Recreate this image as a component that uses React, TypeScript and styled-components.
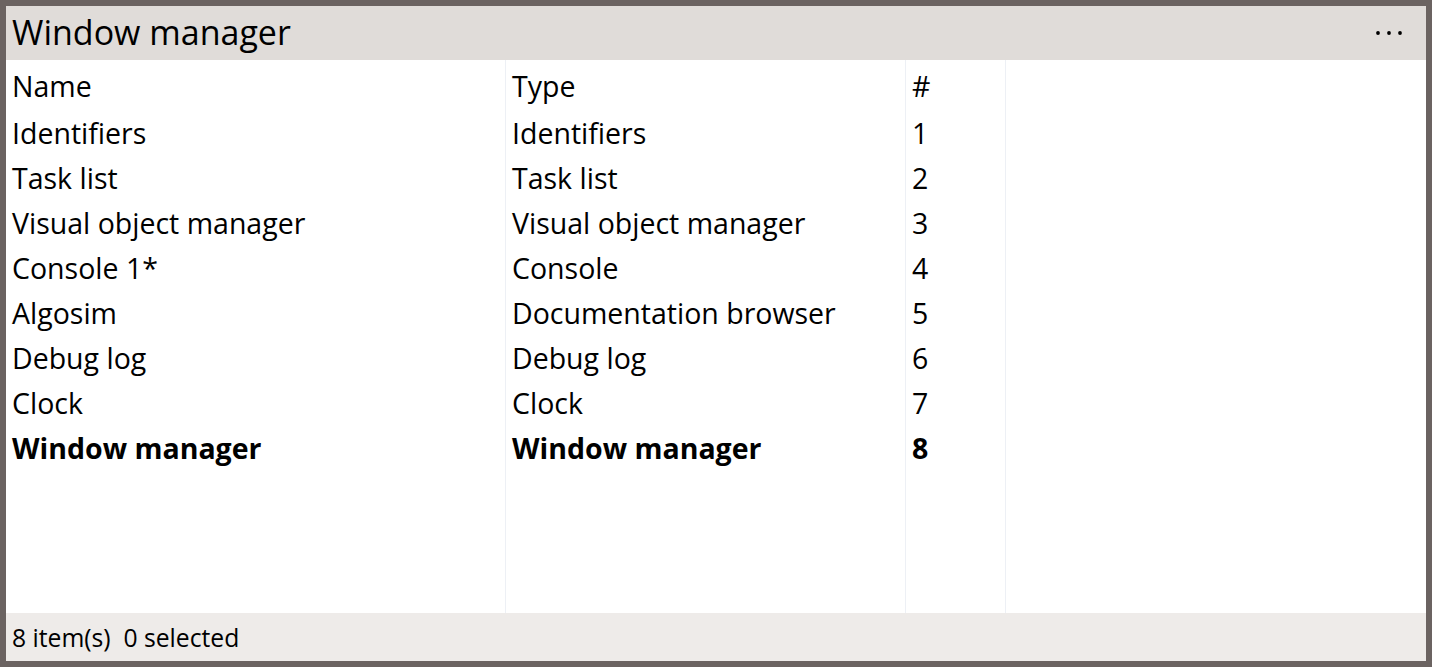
import React from "react";
import styled, { createGlobalStyle } from "styled-components";

const Global = createGlobalStyle`
  html, body { margin: 0; padding: 0; }
  body { background: #6b6361; font-family: "Open Sans", "Noto Sans", sans-serif; color: #000; }
  * { box-sizing: border-box; }
`;

const Frame = styled.div`
  width: 1432px;
  height: 667px;
  border: 6px solid #6b6361;
  background: #fff;
  display: flex;
  flex-direction: column;
  overflow: hidden;
`;

const TitleBar = styled.div`
  height: 54px;
  flex: none;
  background: #e0dcd9;
  display: flex;
  align-items: center;
  justify-content: space-between;
  padding: 0 22px 0 6px;
`;

const Title = styled.div`
  font-size: 34px;
  line-height: 1;
  padding-bottom: 2px;
`;

const MoreButton = styled.div`
  width: 30px;
  height: 20px;
  display: flex;
  align-items: center;
  justify-content: center;
`;

const Table = styled.div`
  flex: 1;
  display: flex;
  min-height: 0;
`;

const Column = styled.div<{ $w?: number }>`
  ${(p) => (p.$w ? `width: ${p.$w}px; flex: none;` : "flex: 1;")}
  display: flex;
  flex-direction: column;
  border-right: ${(p) => (p.$w ? "1px solid #edf0f5" : "none")};
`;

const HeadCell = styled.div`
  height: 50px;
  display: flex;
  align-items: center;
  padding: 2px 6px 0;
  font-size: 28.5px;
  white-space: nowrap;
`;

const Cell = styled.div<{ $bold?: boolean }>`
  height: 45px;
  display: flex;
  align-items: center;
  padding: 0 6px;
  font-size: 28.5px;
  white-space: nowrap;
  font-weight: ${(p) => (p.$bold ? 700 : 400)};
`;

const StatusBar = styled.div`
  height: 48px;
  flex: none;
  background: #eeebe9;
  display: flex;
  align-items: center;
  padding: 0 6px;
  font-size: 24.7px;
  white-space: pre;
`;

const rows = [
  ["Identifiers", "Identifiers", "1"],
  ["Task list", "Task list", "2"],
  ["Visual object manager", "Visual object manager", "3"],
  ["Console 1*", "Console", "4"],
  ["Algosim", "Documentation browser", "5"],
  ["Debug log", "Debug log", "6"],
  ["Clock", "Clock", "7"],
  ["Window manager", "Window manager", "8"],
];

const cols = [
  { title: "Name", w: 500 },
  { title: "Type", w: 400 },
  { title: "#", w: 100 },
];

export default function App() {
  return (
    <>
      <Global />
      <Frame>
        <TitleBar>
          <Title>Window manager</Title>
          <MoreButton>
            <svg width="26" height="6" viewBox="0 0 26 6">
              <circle cx="2" cy="3" r="1.9" fill="#000" />
              <circle cx="13" cy="3" r="1.9" fill="#000" />
              <circle cx="24" cy="3" r="1.9" fill="#000" />
            </svg>
          </MoreButton>
        </TitleBar>
        <Table>
          {cols.map((c, ci) => (
            <Column key={c.title} $w={c.w}>
              <HeadCell>{c.title}</HeadCell>
              {rows.map((r, ri) => (
                <Cell key={ri} $bold={ri === rows.length - 1}>
                  {r[ci]}
                </Cell>
              ))}
            </Column>
          ))}
          <Column />
        </Table>
        <StatusBar>{"8 item(s)  0 selected"}</StatusBar>
      </Frame>
    </>
  );
}
